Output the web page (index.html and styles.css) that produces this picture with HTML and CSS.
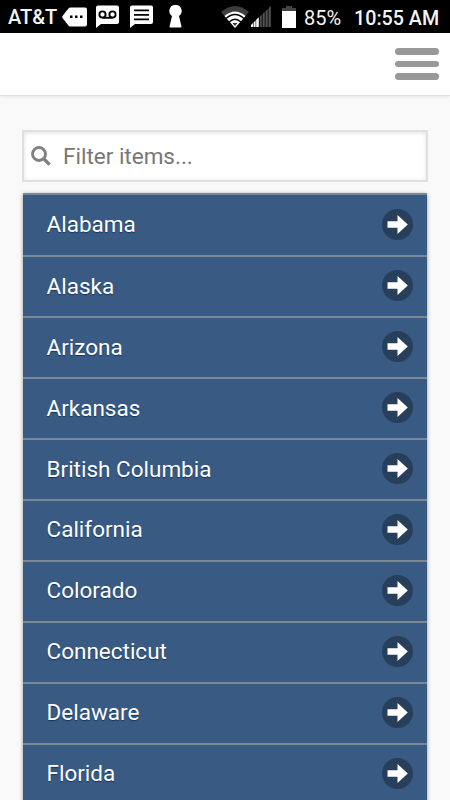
FILE: index.html
```html
<!DOCTYPE html>
<html lang="en">
<head>
    <meta charset="UTF-8">
    <meta name="viewport" content="width=device-width, initial-scale=1.0">
    <title>Locations</title>
    <link rel="stylesheet" href="styles.css">
</head>
<body>
    <div class="status-bar">
        <span class="carrier">AT&amp;T</span>
        <svg class="icon-more" width="25" height="20" viewBox="0 0 25 20">
            <path d="M8 .5h15q2 0 2 2v15q0 2-2 2H8q-1 0-2-1.500L.5 11q-.6-1 0-2L6 2q1-1.500 2-1.500z" fill="#fff"/>
            <path d="M8 8.500h2.500v2.500H8zM13 8.500h2.500v2.500H13zM18 8.500h2.500v2.500H18z" fill="#000"/>
        </svg>
        <svg class="icon-voicemail" width="23" height="23" viewBox="0 0 23 23">
            <path d="M2 .5h19q2 0 2 2v14.500q0 2-2 2H5l-5 4V2.500q0-2 2-2z" fill="#fff"/>
            <g fill="none" stroke="#000" stroke-width="1.900">
                <circle cx="6.500" cy="9.500" r="3.100"/>
                <circle cx="16.500" cy="9.500" r="3.100"/>
                <path d="M6.500 12.800h10"/>
            </g>
        </svg>
        <svg class="icon-message" width="23" height="23" viewBox="0 0 23 23">
            <path d="M2 .5h19q2 0 2 2v14.500q0 2-2 2H5l-5 4V2.500q0-2 2-2z" fill="#fff"/>
            <path d="M4 5.300h15M4 9.800h15M4 14.300h15" stroke="#000" stroke-width="1.800"/>
        </svg>
        <svg class="icon-key" width="13" height="23" viewBox="0 0 13 23">
            <path d="M6.500 0a6 6 0 0 1 3.500 11l2.500 10.500q0 1-1 1h-10q-1 0-1-1L3 11A6 6 0 0 1 6.500 0z" fill="#fff"/>
        </svg>
        <svg class="icon-wifi" width="28" height="22" viewBox="0 0 28 22">
            <path d="M0 6Q14-6 28 6L14 22z" fill="#3d3d3d"/>
            <path d="M3.500 10Q14 1 24.500 10L14 22z" fill="#fff"/>
            <g fill="none" stroke="#000" stroke-width="1.300">
                <path d="M5 12.500q9-8 18 0M8 15.900q6-5.400 12 0"/>
            </g>
            <path d="M11.500 17h5L14 20z" fill="#333"/>
        </svg>
        <svg class="icon-signal" width="20" height="21" viewBox="0 0 20 21">
            <path d="M0 21v-2l2-2v4zM2.600 21v-4.600l2-2V21zM5.200 21v-7.200l2.600-2.600V21z" fill="#fff"/>
            <path d="M8.500 21V10.800L20 0v21z" fill="#262626"/>
            <path d="M9 21V10.500l1.500-1.500v12zM12 21V7.500l1.500-1.500v15zM15 21V4.700l1.500-1.500V21zM18 21V2l1.700-1.700V21z" fill="#505050"/>
        </svg>
        <svg class="icon-battery" width="14" height="22" viewBox="0 0 14 22">
            <path d="M0 2h4V0h6v2h4v4H0z" fill="#444"/>
            <path d="M0 5h14v17H0z" fill="#fff"/>
        </svg>
        <span class="battery-level">85%</span>
        <span class="clock">10:55 AM</span>
    </div>

    <div class="header">
        <div class="menu-button">
            <span></span>
            <span></span>
            <span></span>
        </div>
    </div>

    <div class="content">
        <label class="filter">
            <svg width="20" height="20" viewBox="0 0 20 20">
                <g fill="none" stroke="#808080" stroke-width="2.900">
                    <circle cx="8" cy="8" r="6.500"/>
                    <path d="M12.600 12.600l6 6" stroke-width="3.400"/>
                </g>
            </svg>
            <input type="text" placeholder="Filter items...">
        </label>

        <ul class="list" id="list"></ul>
    </div>

    <script>
        const states = [
            "Alabama", "Alaska", "Arizona", "Arkansas", "British Columbia",
            "California", "Colorado", "Connecticut", "Delaware", "Florida"
        ];

        const list = document.getElementById("list");

        states.forEach(name => {
            const item = document.createElement("li");
            item.innerHTML = `
                <span>${name}</span>
                <svg width="31" height="31" viewBox="0 0 31 31">
                    <circle cx="15.500" cy="15.500" r="15.500" fill="#283f5b"/>
                    <path d="M5.500 12.300h10V6l10.300 9.500L15.500 25v-6.300h-10z" fill="#fff"/>
                </svg>`;
            list.appendChild(item);
        });
    </script>
</body>
</html>
```

FILE: styles.css
```css
body, html {
    margin: 0;
    padding: 0;
    height: 100%;
    font-family: Roboto, sans-serif;
    background: #f9f9f9;
    overflow: hidden;
}

* {
    box-sizing: border-box;
}

svg {
    display: block;
    flex-shrink: 0;
}

.status-bar {
    height: 33px;
    padding-left: 8px;
    display: flex;
    align-items: center;
    background: #000;
    color: #f4f4f4;
    font-size: 20px;
    line-height: 33px;
    white-space: nowrap;
}

.carrier {
    width: 54px;
    font-weight: 500;
    padding-top: 2px;
}

.icon-voicemail {
    margin-left: 9px;
}

.icon-message {
    margin-left: 11px;
}

.icon-key {
    margin-left: 16px;
}

.icon-wifi {
    margin-left: 39px;
}

.icon-signal {
    margin-left: 2px;
}

.icon-battery {
    margin-left: 11px;
}

.battery-level {
    width: 50px;
    margin-left: 8px;
    padding-top: 3px;
}

.clock {
    font-size: 19.700px;
    font-weight: 500;
    padding-top: 3px;
}

.header {
    height: 63px;
    padding-right: 11px;
    display: flex;
    align-items: center;
    justify-content: flex-end;
    background: #fff;
    border-bottom: 1px solid #e2e2e2;
    box-shadow: 0 1px 3px rgba(0, 0, 0, 0.08);
}

.menu-button {
    width: 44px;
    display: flex;
    flex-direction: column;
    gap: 6px;
}

.menu-button span {
    height: 6.500px;
    border-radius: 4px;
    background: #999;
}

.content {
    padding: 34px 22px 0;
}

.filter {
    height: 52px;
    padding-left: 7px;
    display: flex;
    align-items: center;
    background: #fff;
    border: 2px solid #e0e0e0;
    box-shadow: inset 0 1px 4px rgba(0, 0, 0, 0.12);
}

.filter input {
    flex: 1;
    min-width: 0;
    margin-left: 12px;
    padding: 0;
    border: 0;
    outline: none;
    background: none;
    font-family: inherit;
    font-size: 22.500px;
}

.filter input::placeholder {
    color: #777;
}

.list {
    margin: 11px 1px 0;
    padding: 0;
    list-style: none;
    box-shadow: 0 1px 4px rgba(0, 0, 0, 0.4);
}

.list li {
    height: 60.950px;
    padding: 0 14px 1.500px 23.500px;
    display: flex;
    align-items: center;
    justify-content: space-between;
    background: #385a83;
    border-top: 2px solid #798893;
    color: #fff;
    font-size: 22.500px;
    text-shadow: 0 1px 1px rgba(0, 30, 70, 0.6);
}

.list li:first-child {
    height: 62px;
}
```
